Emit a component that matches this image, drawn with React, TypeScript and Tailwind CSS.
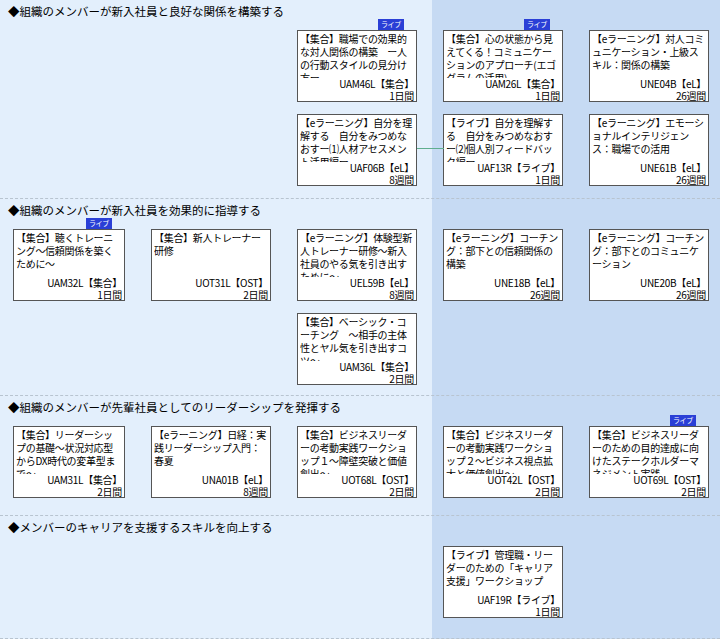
const F = { fontFamily: '"Noto Sans CJK JP", "Noto Sans", sans-serif' };

type C = { t: string; code: string; dur: string; live?: boolean; col: number; row: number };

const sections: { title: string; h: number; cards: C[] }[] = [
  {
    title: "◆組織のメンバーが新入社員と良好な関係を構築する",
    h: 199,
    cards: [
      { t: "【集合】職場での効果的な対人関係の構築　ー人の行動スタイルの見分け方ー", code: "UAM46L【集合】", dur: "1日間", live: true, col: 3, row: 1 },
      { t: "【集合】心の状態から見えてくる！コミュニケーションのアプローチ(エゴグラムの活用)", code: "UAM26L【集合】", dur: "1日間", live: true, col: 4, row: 1 },
      { t: "【eラーニング】対人コミュニケーション・上級スキル：関係の構築", code: "UNE04B【eL】", dur: "26週間", col: 5, row: 1 },
      { t: "【eラーニング】自分を理解する　自分をみつめなおすー⑴人材アセスメント活用編ー", code: "UAF06B【eL】", dur: "8週間", col: 3, row: 2 },
      { t: "【ライブ】自分を理解する　自分をみつめなおすー⑵個人別フィードバック編ー", code: "UAF13R【ライブ】", dur: "1日間", col: 4, row: 2 },
      { t: "【eラーニング】エモーショナルインテリジェンス：職場での活用", code: "UNE61B【eL】", dur: "26週間", col: 5, row: 2 },
    ],
  },
  {
    title: "◆組織のメンバーが新入社員を効果的に指導する",
    h: 197,
    cards: [
      { t: "【集合】聴くトレーニング～信頼関係を築くために～", code: "UAM32L【集合】", dur: "1日間", live: true, col: 1, row: 1 },
      { t: "【集合】新人トレーナー研修", code: "UOT31L【OST】", dur: "2日間", col: 2, row: 1 },
      { t: "【eラーニング】体験型新人トレーナー研修～新入社員のやる気を引き出すために～", code: "UEL59B【eL】", dur: "8週間", col: 3, row: 1 },
      { t: "【eラーニング】コーチング：部下との信頼関係の構築", code: "UNE18B【eL】", dur: "26週間", col: 4, row: 1 },
      { t: "【eラーニング】コーチング：部下とのコミュニケーション", code: "UNE20B【eL】", dur: "26週間", col: 5, row: 1 },
      { t: "【集合】ベーシック・コーチング　～相手の主体性とヤル気を引き出すコツ～", code: "UAM36L【集合】", dur: "2日間", col: 3, row: 2 },
    ],
  },
  {
    title: "◆組織のメンバーが先輩社員としてのリーダーシップを発揮する",
    h: 120,
    cards: [
      { t: "【集合】リーダーシップの基礎～状況対応型からDX時代の変革型まで～", code: "UAM31L【集合】", dur: "2日間", col: 1, row: 1 },
      { t: "【eラーニング】日経：実践リーダーシップ入門：春夏", code: "UNA01B【eL】", dur: "8週間", col: 2, row: 1 },
      { t: "【集合】ビジネスリーダーの考動実践ワークショップ１～障壁突破と価値創出～", code: "UOT68L【OST】", dur: "2日間", col: 3, row: 1 },
      { t: "【集合】ビジネスリーダーの考動実践ワークショップ２～ビジネス視点拡大と価値創出～", code: "UOT42L【OST】", dur: "2日間", col: 4, row: 1 },
      { t: "【集合】ビジネスリーダーのための目的達成に向けたステークホルダーマネジメント実践", code: "UOT69L【OST】", dur: "2日間", live: true, col: 5, row: 1 },
    ],
  },
  {
    title: "◆メンバーのキャリアを支援するスキルを向上する",
    h: 123,
    cards: [
      { t: "【ライブ】管理職・リーダーのための「キャリア支援」ワークショップ", code: "UAF19R【ライブ】", dur: "1日間", col: 4, row: 1 },
    ],
  },
];

const colStart = ["", "col-start-1", "col-start-2", "col-start-3", "col-start-4", "col-start-5"];
const rowStart = ["", "row-start-1", "row-start-2"];

function Card({ c }: { c: C }) {
  return (
    <div className={`relative ${colStart[c.col]} ${rowStart[c.row]} h-[72px] bg-white border border-[#555] flex flex-col px-[2px] text-[10px] leading-[13px] text-black [font-feature-settings:'palt'] tracking-[-0.3px]`}>
      {c.live && (
        <div className="absolute -top-[12px] right-[12px] bg-[#2a3fd6] text-white text-[7px] leading-[10px] px-[3px] h-[11px]">ライブ</div>
      )}
      <div className="pt-[1px] overflow-hidden">{c.t}</div>
      <div className="mt-auto text-right leading-[12px]">{c.code}</div>
      <div className="text-right leading-[11px]">{c.dur}</div>
    </div>
  );
}

export default function App() {
  return (
    <div style={F} className="w-[720px] h-[639px] overflow-hidden bg-[linear-gradient(to_right,#e3effc_432px,#c6daf3_432px)]">
      {sections.map((s, i) => (
        <div key={i} style={{ height: s.h }} className="relative border-b border-dashed border-[#b8c4d0] pt-[3px]">
          <div className="pl-[8px] text-[11.5px] leading-[16px] text-black [font-feature-settings:'palt']">{s.title}</div>
          <div className="mt-[11px] pl-[13px] grid grid-cols-[112px_120px_120px_120px_120px] gap-x-[26px] gap-y-[12px]">
            {s.cards.map((c, j) => (
              <Card key={j} c={c} />
            ))}
          </div>
          {i === 0 && <div className="absolute left-[417px] top-[148px] w-[27px] h-[1px] bg-[#5fae8e]" />}
        </div>
      ))}
    </div>
  );
}
